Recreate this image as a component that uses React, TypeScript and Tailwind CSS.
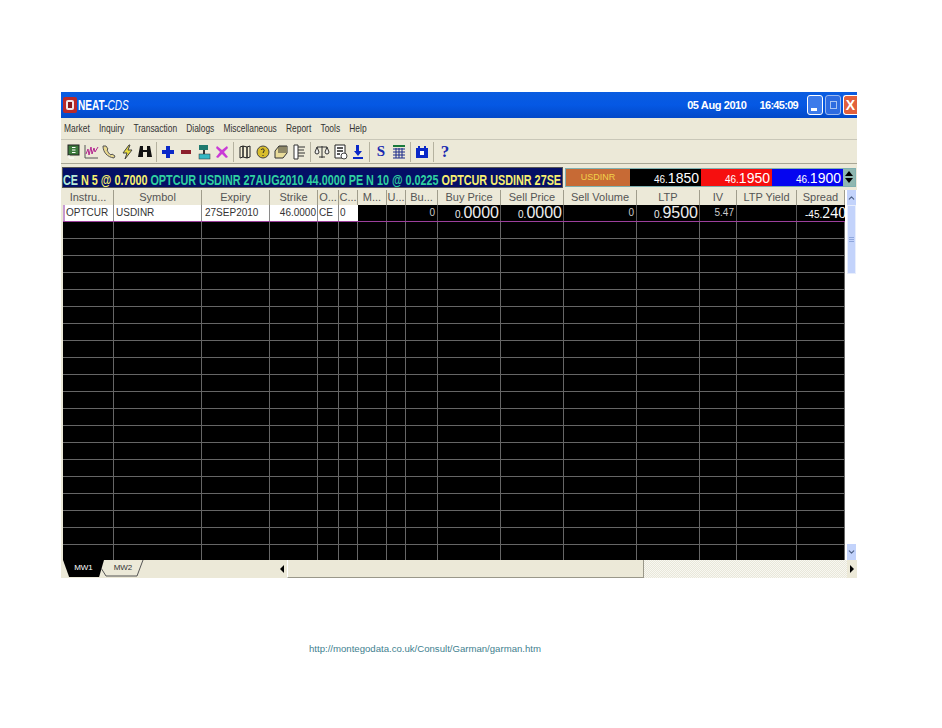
import { ChevronUp, ChevronDown } from 'lucide-react'

const columns = [
  { name: 'Instru...', w: 51 },
  { name: 'Symbol', w: 88 },
  { name: 'Expiry', w: 68 },
  { name: 'Strike', w: 48 },
  { name: 'O...', w: 21 },
  { name: 'C...', w: 19 },
  { name: 'M...', w: 29 },
  { name: 'U...', w: 19 },
  { name: 'Bu...', w: 32 },
  { name: 'Buy Price', w: 63 },
  { name: 'Sell Price', w: 63 },
  { name: 'Sell Volume', w: 73 },
  { name: 'LTP', w: 63 },
  { name: 'IV', w: 37 },
  { name: 'LTP Yield', w: 60 },
  { name: 'Spread', w: 48 },
]

const menus = ['Market', 'Inquiry', 'Transaction', 'Dialogs', 'Miscellaneous', 'Report', 'Tools', 'Help']

function Price({ small, big, bigClass = 'text-[16px]' }: { small: string; big: string; bigClass?: string }) {
  return (
    <span className="whitespace-nowrap">
      <span className="text-[10px]">{small}</span>
      <span className={bigClass}>{big}</span>
    </span>
  )
}

function Icon({ children }: { children: React.ReactNode }) {
  return (
    <svg width="16" height="16" viewBox="0 0 16 16" className="shrink-0">
      {children}
    </svg>
  )
}

function Sep() {
  return <div className="w-px h-[20px] bg-[#b5b2a0] mx-px shrink-0" />
}

function Toolbar() {
  return (
    <div className="h-[24px] shrink-0 flex items-center gap-[2px] pl-[4px] bg-[#ece9d8] border-t border-[#c9c7b8]">
      <Icon><rect x="3" y="1" width="11" height="10" fill="#3c7a3c" stroke="#222" /><path d="M7 3.5h3.5M7 6h3.5M7 8.5h3.5M4 11v3h5" stroke="#fff" fill="none" /></Icon>
      <Icon><path d="M2 1v13h13" stroke="#555" fill="none" /><path d="M3 10l2-5 1 6 2-8 1 7 2-6 1 4 3-5" stroke="#b3278f" fill="none" /></Icon>
      <Icon><path d="M2 2c0 6 4 11 11 12l1-2-3-2-1 1c-2-1-3-3-4-5l1-1-2-3z" fill="#e9d98f" stroke="#555" /></Icon>
      <Icon><path d="M10 1L4 9h4l-2 6 7-9H9l2-5z" fill="#e8dc3c" stroke="#444" /></Icon>
      <Icon><path d="M3 2h3v4h4V2h3l2 11h-5V8H6v5H1z" fill="#111" /></Icon>
      <Sep />
      <Icon><path d="M6 2h4v4h4v4h-4v4H6v-4H2V6h4z" fill="#0a28c8" /></Icon>
      <Icon><rect x="3" y="6" width="10" height="4" fill="#8c1f2c" /></Icon>
      <Icon><rect x="3" y="1" width="9" height="5" fill="#1f7a6e" /><rect x="7" y="6" width="2" height="5" fill="#333" /><rect x="3" y="10" width="11" height="5" fill="#35b8c4" stroke="#333" strokeWidth=".5" /></Icon>
      <Icon><path d="M3 2l5 4 5-4 1 2-4 4 4 5-2 1-4-4-4 4-2-1 4-5-4-4z" fill="#c93ad6" /></Icon>
      <Sep />
      <Icon><path d="M3 3l3-1v11l-3 1zM6 2l4 1v11l-4-1zM10 3l3-1v11l-3 1z" fill="#f4efd8" stroke="#222" /></Icon>
      <Icon><circle cx="8" cy="8" r="6" fill="#d8bd2c" stroke="#444" /><path d="M6 6c1-2 4-1 3 1l-1 2M8 11v1" stroke="#222" fill="none" /></Icon>
      <Icon><path d="M2 7l4-5h8v7l-4 5H2z" fill="#e9dc9a" stroke="#333" /><path d="M6 2v7M8 2v7M10 2v7M12 2v7" stroke="#333" /></Icon>
      <Icon><path d="M3 1h4v14H3zM7 3h7M7 6h6M7 9h7M7 12h6" fill="#fff" stroke="#333" /></Icon>
      <Sep />
      <Icon><path d="M8 2v12M3 3h10M5 13h6" stroke="#333" fill="none" /><path d="M1 8l2-5 2 5a2 2 0 01-4 0zM11 8l2-5 2 5a2 2 0 01-4 0z" fill="#eee" stroke="#333" /></Icon>
      <Icon><path d="M3 1h10v13H3z" fill="#fff" stroke="#222" /><path d="M5 4h6M5 7h6M5 10h3" stroke="#222" strokeWidth="1.5" /><circle cx="12" cy="12" r="3" fill="#fff" stroke="#444" /></Icon>
      <Icon><path d="M6 1h3v6h3l-4 5-4-5h2z" fill="#0a28c8" /><rect x="3" y="13" width="10" height="2" fill="#0a28c8" /></Icon>
      <Sep />
      <div className="w-[16px] text-center font-['Liberation_Serif',serif] font-bold text-[15px] leading-none text-[#1a2ab0]">S</div>
      <Icon><rect x="2" y="1" width="12" height="2" fill="#1a7a3a" /><path d="M2 5h12M2 8h12M2 11h12M2 14h12M5 4v10M8 4v10M11 4v10" stroke="#1a2a8a" /></Icon>
      <Sep />
      <Icon><path d="M2 4h12v10H2z" fill="#0a28c8" /><path d="M5 2v4M11 2v4" stroke="#0a28c8" strokeWidth="2" /><rect x="6" y="7" width="4" height="4" fill="#fff" /></Icon>
      <Sep />
      <div className="w-[16px] text-center font-['Liberation_Serif',serif] font-bold text-[17px] leading-none text-[#1a2ab0]">?</div>
    </div>
  )
}

function Grid() {
  const rows = Array.from({ length: 20 })
  return (
    <div className="flex flex-1 min-h-0">
      <div className="w-[784px] pl-[2px] flex flex-col min-h-0 overflow-hidden">
        <div className="flex h-[15px] bg-[#ece9d8] text-[11px] leading-[15px] text-[#555] shrink-0">
          {columns.map((c) => (
            <div key={c.name} style={{ width: c.w }} className="shrink-0 text-center border-r border-[#a09d8c] overflow-hidden whitespace-nowrap">
              {c.name}
            </div>
          ))}
        </div>
        <div className="flex-1 bg-black overflow-hidden">
          <div className="flex h-[17px] border-b border-[#9c3f9c] text-[10px] leading-[16px] text-[#333]">
            <div className="w-[51px] shrink-0 bg-white border-l-2 border-l-[#c79ad0] border-r border-r-[#8a8a8a] pl-px overflow-hidden">OPTCUR</div>
            <div className="w-[88px] shrink-0 bg-white border-r border-[#8a8a8a] pl-[2px]">USDINR</div>
            <div className="w-[68px] shrink-0 bg-white border-r border-[#8a8a8a] pl-[3px]">27SEP2010</div>
            <div className="w-[48px] shrink-0 bg-white border-r border-[#8a8a8a] pr-px text-right">46.0000</div>
            <div className="w-[21px] shrink-0 bg-white border-r border-[#8a8a8a] pl-px">CE</div>
            <div className="w-[19px] shrink-0 bg-white pl-px">0</div>
            <div className="w-[29px] shrink-0 border-r border-[#555]" />
            <div className="w-[19px] shrink-0 border-r border-[#555]" />
            <div className="w-[32px] shrink-0 border-r border-[#555] text-right pr-[2px] text-[#ccc]">0</div>
            <div className="w-[63px] shrink-0 border-r border-[#555] text-right pr-px text-[#eee]"><Price small="0." big="0000" /></div>
            <div className="w-[63px] shrink-0 border-r border-[#555] text-right pr-px text-[#eee]"><Price small="0." big="0000" /></div>
            <div className="w-[73px] shrink-0 border-r border-[#555] text-right pr-[2px] text-[#ccc]">0</div>
            <div className="w-[63px] shrink-0 border-r border-[#555] text-right pr-px text-[#eee]"><Price small="0." big="9500" /></div>
            <div className="w-[37px] shrink-0 border-r border-[#555] text-right pr-[2px] text-[#ccc]">5.47</div>
            <div className="w-[60px] shrink-0 border-r border-[#555]" />
            <div className="w-[48px] shrink-0 pl-[8px] text-white whitespace-nowrap">
              <span className="text-[10px]">-45.</span>
              <span className="text-[16px] font-['Liberation_Serif',serif]">240</span>
            </div>
          </div>
          {rows.map((_, i) => (
            <div key={i} className="flex h-[17px] border-b border-[#666]">
              {columns.map((c) => (
                <div key={c.name} style={{ width: c.w }} className="shrink-0 border-r border-[#666]" />
              ))}
            </div>
          ))}
        </div>
      </div>
      <div className="w-[12px] pl-[2px] pr-px flex flex-col bg-white">
        <div className="h-[15px] bg-[#c3d3fb] flex items-center justify-center"><ChevronUp size={10} strokeWidth={3} className="text-[#4d6185]" /></div>
        <div className="h-[69px] bg-[#c3d3fb] border border-[#e8eefc] flex flex-col items-center justify-center gap-px">
          <div className="w-[5px] h-px bg-[#8ea6dc]" />
          <div className="w-[5px] h-px bg-[#8ea6dc]" />
          <div className="w-[5px] h-px bg-[#8ea6dc]" />
        </div>
        <div className="flex-1" />
        <div className="h-[16px] bg-[#c3d3fb] flex items-center justify-center"><ChevronDown size={10} strokeWidth={3} className="text-[#4d6185]" /></div>
      </div>
    </div>
  )
}

export default function App() {
  return (
    <div className="w-[942px] h-[728px] bg-white pt-[92px] pl-[61px] font-['Liberation_Sans',sans-serif]">
      <div className="w-[796px] h-[486px] flex flex-col bg-[#ece9d8]">
        {/* Title bar */}
        <div className="h-[26px] shrink-0 flex items-center bg-gradient-to-b from-[#0a5ce0] via-[#0558e4] to-[#0349c8] text-white pl-[2px]">
          <svg width="14" height="16" viewBox="0 0 14 16" className="shrink-0">
            <rect width="14" height="16" rx="2" fill="#b92a2a" />
            <rect x="3" y="3" width="8" height="10" rx="2" fill="#f1e6e6" />
            <rect x="5" y="5" width="4" height="6" fill="#8a1a1a" />
          </svg>
          <span className="inline-block w-[52px] ml-px text-[14px] font-bold whitespace-nowrap origin-left scale-x-[.72]">NEAT-<span className="italic font-normal">CDS</span></span>
          <span className="ml-auto text-[11px] font-bold tracking-[-0.4px]">05 Aug 2010</span>
          <span className="ml-[13px] text-[11px] font-bold tracking-[-0.7px]">16:45:09</span>
          <div className="ml-[9px] w-[16px] h-[20px] rounded-[3px] bg-[#3d7bea] border border-white flex items-end pl-[3px] pb-[3px]"><div className="w-[6px] h-[3px] bg-white" /></div>
          <div className="ml-[2px] w-[16px] h-[20px] rounded-[3px] bg-[#2e6be0] border border-[#9db9ee] flex items-center justify-center"><div className="w-[7px] h-[8px] border border-[#a8c2f2]" /></div>
          <div className="ml-[2px] w-[14px] h-[20px] rounded-l-[3px] bg-[#e2603c] border border-white border-r-0 flex items-center justify-center text-[14px] font-bold leading-none overflow-hidden">X</div>
        </div>
        {/* Menu */}
        <div className="h-[21px] shrink-0 flex items-center gap-[12px] pl-[4px] text-[11px] text-[#333] whitespace-nowrap origin-left scale-x-[.765]">
          {menus.map((m) => <span key={m}>{m}</span>)}
        </div>
        <Toolbar />
        {/* Ticker + quote */}
        <div className="h-[27px] shrink-0 flex items-center pl-px border-t border-[#a8a695]">
          <div className="w-[501px] h-[21px] bg-[#040f66] overflow-hidden whitespace-nowrap border border-[#555]">
            <span className="inline-block text-[14px] font-bold leading-[19px] origin-left scale-x-[.772]">
              <span className="text-[#b8ead8]">CE </span><span className="text-[#f6ee70]">N 5 @ 0.7000 </span>
              <span className="text-[#2fd0a0]">OPTCUR USDINR 27AUG2010 44.0000 PE N 10 @ 0.0225 </span>
              <span className="text-[#f6ee70]">OPTCUR USDINR 27SE</span>
            </span>
          </div>
          <div className="w-[291px] h-[19px] flex border border-[#7fb0b0] ml-[2px]">
            <div className="w-[64px] bg-[#c76a35] text-[#f2d24a] text-[9px] leading-[17px] text-center">USDINR</div>
            <div className="w-[71px] bg-black text-white text-right leading-[17px] pr-[2px]"><Price small="46." big="1850" bigClass="text-[14px]" /></div>
            <div className="w-[71px] bg-[#f60f0f] text-white text-right leading-[17px] pr-[2px]"><Price small="46." big="1950" bigClass="text-[14px]" /></div>
            <div className="flex-1 bg-[#0505f0] text-white text-right leading-[17px] pr-[2px]"><Price small="46." big="1900" bigClass="text-[14px]" /></div>
            <div className="w-[12px] bg-[#8fb7b0] flex flex-col items-center justify-center gap-[2px]">
              <div className="w-0 h-0 border-x-[4px] border-x-transparent border-b-[5px] border-b-black" />
              <div className="w-0 h-0 border-x-[4px] border-x-transparent border-t-[5px] border-t-black" />
            </div>
          </div>
        </div>
        <Grid />
        {/* Tabs and horizontal scroll */}
        <div className="h-[18px] shrink-0 flex items-stretch bg-[#ece9d8] text-[8px] leading-[16px]">
          <div className="w-[216px] pl-[2px] flex items-start shrink-0">
            <div className="w-[41px] h-[17px] bg-black text-white text-center [clip-path:polygon(0_0,100%_0,88%_100%,15%_100%)]">MW1</div>
            <div className="relative w-[44px] h-[17px] -ml-[3px] text-[#333] text-center">
              <svg width="44" height="17" viewBox="0 0 44 17" className="absolute left-0 top-0">
                <path d="M0 8L5 16H36L42 0" fill="none" stroke="#555" />
              </svg>
              <span className="relative">MW2</span>
            </div>
          </div>
          <div className="w-[10px] flex items-center justify-center shrink-0"><div className="w-0 h-0 border-y-[4px] border-y-transparent border-r-[4px] border-r-black" /></div>
          <div className="w-[357px] shrink-0 bg-[#ece9d8] border-r border-b border-[#9a988a] border-l border-l-white" />
          <div className="flex-1 bg-[repeating-conic-gradient(#e9e7da_0_25%,#f8f8f2_0_50%)] bg-[length:2px_2px]" />
          <div className="w-[10px] flex items-center justify-center shrink-0"><div className="w-0 h-0 border-y-[4px] border-y-transparent border-l-[4px] border-l-black" /></div>
        </div>
      </div>
      <div className="ml-[248px] mt-[65px] text-[9.6px] leading-[12px] text-[#3f7f8f]">http://montegodata.co.uk/Consult/Garman/garman.htm</div>
    </div>
  )
}
